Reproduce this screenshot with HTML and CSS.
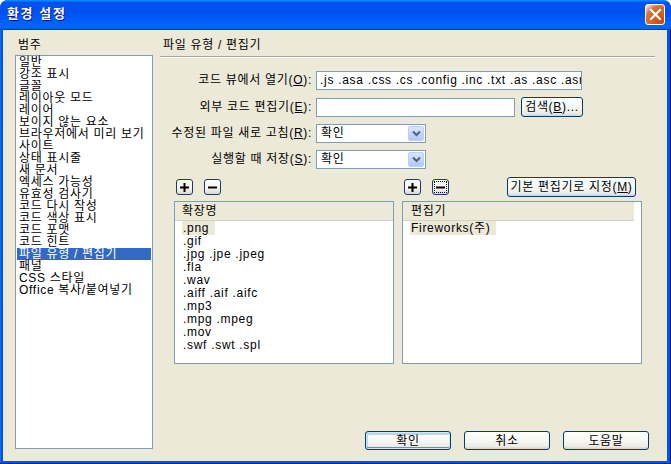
FILE: index.html
```html
<!DOCTYPE html>
<html lang="ko">
<head>
<meta charset="utf-8">
<title>환경 설정</title>
<link rel="stylesheet" href="styles.css">
</head>
<body>
<div class="window">
  <div class="titlebar">
    <span class="title">환경 설정</span>
    <span class="close"><svg width="13" height="13" viewBox="0 0 13 13"><path d="M2 2 L11 11 M11 2 L2 11" stroke="#fff" stroke-width="2.2" stroke-linecap="square"/></svg></span>
  </div>
  <div class="frame">
    <div class="client">
      <div class="left">
        <div class="caption">범주</div>
        <ul class="listbox">
          <li>일반</li>
          <li>강조 표시</li>
          <li>글꼴</li>
          <li>레이아웃 모드</li>
          <li>레이어</li>
          <li>보이지 않는 요소</li>
          <li>브라우저에서 미리 보기</li>
          <li>사이트</li>
          <li>상태 표시줄</li>
          <li>새 문서</li>
          <li>엑세스 가능성</li>
          <li>유효성 검사기</li>
          <li>코드 다시 작성</li>
          <li>코드 색상 표시</li>
          <li>코드 포맷</li>
          <li>코드 힌트</li>
          <li class="sel">파일 유형 / 편집기</li>
          <li>패널</li>
          <li>CSS 스타일</li>
          <li>Office 복사/붙여넣기</li>
        </ul>
      </div>
      <div class="right">
        <div class="caption">파일 유형 / 편집기</div>
        <div class="rule"></div>
        <div class="form">
          <label>코드 뷰에서 열기(<u>O</u>):</label>
          <div class="field wide">.js .asa .css .cs .config .inc .txt .as .asc .asr .ascx</div>
          <label>외부 코드 편집기(<u>E</u>):</label>
          <div class="field-row">
            <div class="field medium"></div>
            <span class="btn browse">검색(<u>B</u>)...</span>
          </div>
          <label>수정된 파일 새로 고침(<u>R</u>):</label>
          <div class="combo"><span class="combo-text">확인</span><span class="arrow"><svg width="9" height="7" viewBox="0 0 9 7"><path d="M1 1.5 L4.5 5 L8 1.5" fill="none" stroke="#4D6185" stroke-width="2"/></svg></span></div>
          <label>실행할 때 저장(<u>S</u>):</label>
          <div class="combo"><span class="combo-text">확인</span><span class="arrow"><svg width="9" height="7" viewBox="0 0 9 7"><path d="M1 1.5 L4.5 5 L8 1.5" fill="none" stroke="#4D6185" stroke-width="2"/></svg></span></div>
        </div>
        <div class="tables">
          <div class="col col-ext">
            <div class="tools">
              <span class="mini"><svg width="9" height="9" viewBox="0 0 9 9"><path d="M3.5 0h2v3.5H9v2H5.5V9h-2V5.5H0v-2h3.5z" fill="#000"/></svg></span>
              <span class="mini"><svg width="9" height="9" viewBox="0 0 9 9"><path d="M0 3.5h9v2H0z" fill="#000"/></svg></span>
            </div>
            <div class="table">
              <div class="thead">확장명</div>
              <ul class="rows">
                <li><span class="hl">.png</span></li>
                <li><span>.gif</span></li>
                <li><span>.jpg .jpe .jpeg</span></li>
                <li><span>.fla</span></li>
                <li><span>.wav</span></li>
                <li><span>.aiff .aif .aifc</span></li>
                <li><span>.mp3</span></li>
                <li><span>.mpg .mpeg</span></li>
                <li><span>.mov</span></li>
                <li><span>.swf .swt .spl</span></li>
              </ul>
            </div>
          </div>
          <div class="col col-ed">
            <div class="tools">
              <span class="mini"><svg width="9" height="9" viewBox="0 0 9 9"><path d="M3.5 0h2v3.5H9v2H5.5V9h-2V5.5H0v-2h3.5z" fill="#000"/></svg></span>
              <span class="mini focus"><svg width="9" height="9" viewBox="0 0 9 9"><path d="M0 3.5h9v2H0z" fill="#000"/></svg></span>
              <span class="spacer"></span>
              <span class="btn setdef">기본 편집기로 지정(<u>M</u>)</span>
            </div>
            <div class="table">
              <div class="thead ed">편집기</div>
              <ul class="rows ed">
                <li><span class="hl">Fireworks(주)</span></li>
              </ul>
            </div>
          </div>
        </div>
        <div class="buttons">
          <span class="btn dlg default">확인</span>
          <span class="btn dlg">취소</span>
          <span class="btn dlg">도움말</span>
        </div>
      </div>
    </div>
  </div>
</div>
</body>
</html>
```

FILE: styles.css
```css
* { box-sizing: border-box; }
html, body { margin: 0; padding: 0; }
body {
  width: 671px;
  height: 464px;
  overflow: hidden;
  background: #fff;
  font-family: "Liberation Sans", "Noto Sans CJK KR", sans-serif;
  font-size: 12px;
  letter-spacing: 0.7px;
  color: #000;
}
ul { margin: 0; padding: 0; list-style: none; }
u { text-decoration: underline; text-underline-offset: 1px; }

.window {
  width: 671px;
  height: 464px;
  display: flex;
  flex-direction: column;
  border-radius: 8px 8px 0 0;
  overflow: hidden;
  background: #0054E3;
}
.titlebar {
  height: 30px;
  flex: none;
  display: flex;
  align-items: center;
  justify-content: space-between;
  padding: 0 5px 0 7px;
  background: linear-gradient(180deg, #0997ff 0%, #0053ee 8%, #0050ee 40%, #0066ff 88%, #0066ff 93%, #005bff 95%, #003dd7 96%, #003dd7 100%);
}
.title {
  color: #fff;
  font-weight: bold;
  font-size: 13px;
  line-height: 16px;
  letter-spacing: 1.6px;
  text-shadow: 1px 1px 0 #0f1089;
  margin-top: -2px;
}
.close {
  width: 20px;
  height: 21px;
  margin-top: -1px;
  margin-right: 1px;
  border: 1px solid #fff;
  border-radius: 3px;
  display: flex;
  align-items: center;
  justify-content: center;
  background: radial-gradient(circle at 90% 90%, #cc4600 0%, #dc6527 55%, #cd7546 70%, #ffccb2 90%, #ffffff 100%);
}
.frame {
  flex: 1;
  display: flex;
  padding: 0 4px 3px 3px;
  background: #0055e5;
  box-shadow: inset -1px -1px 0 #00138c, inset 1px 0 0 #166aee;
}
.client {
  flex: 1;
  display: flex;
  gap: 7px;
  padding: 9px 12px 12px 12px;
  background: #ECE9D8;
}
.caption {
  height: 12px;
  line-height: 12px;
  padding-left: 3px;
  white-space: nowrap;
}
.left {
  width: 138px;
  flex: none;
  display: flex;
  flex-direction: column;
}
.left .caption { margin-bottom: 4px; }
.listbox {
  flex: 1;
  background: #fff;
  border: 1px solid #7F9DB9;
  padding: 0 1px;
}
.listbox li {
  height: 12px;
  line-height: 12px;
  padding-left: 2px;
  white-space: nowrap;
}
.listbox li.sel {
  background: #316AC5;
  color: #fff;
}

.right {
  flex: 1;
  display: flex;
  flex-direction: column;
}
.rule {
  height: 2px;
  margin-top: 5px;
  border-top: 1px solid #ACA899;
  border-bottom: 1px solid #fff;
}
.form {
  margin-top: 13px;
  display: grid;
  grid-template-columns: 152px auto;
  column-gap: 4px;
  row-gap: 7px;
  align-items: center;
}
.form label {
  text-align: right;
  line-height: 19px;
  white-space: nowrap;
}
.field {
  height: 19px;
  border: 1px solid #7F9DB9;
  background: #fff;
  line-height: 17px;
  padding-left: 3px;
  white-space: nowrap;
  overflow: hidden;
}
.field.wide { width: 266px; }
.field.medium { width: 199px; }
.field-row {
  display: flex;
  align-items: center;
  gap: 6px;
}
.combo {
  width: 110px;
  height: 19px;
  border: 1px solid #7F9DB9;
  background: #fff;
  display: flex;
  align-items: center;
  justify-content: space-between;
  padding: 1px;
}
.combo-text {
  padding-left: 3px;
  line-height: 15px;
}
.arrow {
  width: 16px;
  height: 15px;
  border: 1px solid #B9D1FA;
  border-radius: 2px;
  background: linear-gradient(180deg, #dce6fd 0%, #c1d3fb 60%, #b4c8f6 100%);
  display: flex;
  align-items: center;
  justify-content: center;
}

.btn {
  display: inline-flex;
  align-items: center;
  justify-content: center;
  border: 1px solid #003C74;
  border-radius: 3px;
  background: linear-gradient(180deg, #ffffff 0%, #f7f7f4 50%, #ecebe6 85%, #d6d0c5 100%);
  white-space: nowrap;
  line-height: 14px;
}
.browse { width: 62px; height: 20px; }
.setdef { width: 129px; height: 20px; margin-right: 6px; }

.tables {
  margin: 8px 13px 0 14px;
  display: flex;
  gap: 8px;
}
.col-ext { width: 220px; flex: none; }
.col-ed { flex: 1; }
.tools {
  height: 20px;
  display: flex;
  align-items: center;
  gap: 11px;
  padding-left: 2px;
  margin-bottom: 4px;
}
.spacer { flex: 1; }
.mini {
  width: 17px;
  height: 16px;
  border: 1px solid #1c3a70;
  border-radius: 3px;
  background: linear-gradient(180deg, #ffffff 0%, #f4f3ee 60%, #dcd8cc 100%);
  display: flex;
  align-items: center;
  justify-content: center;
}
.mini.focus {
  outline: 1px dotted #000;
  outline-offset: -3px;
}
.table {
  height: 163px;
  border: 1px solid #7F9DB9;
  background: #fff;
}
.thead {
  height: 19px;
  line-height: 18px;
  padding-left: 7px;
  background: #ECE9D8;
  border-bottom: 1px solid #d6d2c2;
  white-space: nowrap;
}
.thead.ed { padding-left: 8px; margin-right: 7px; }
.rows {
  margin-top: 1px;
  padding-left: 7px;
}
.rows.ed { padding-left: 7px; }
.rows li {
  height: 13px;
  line-height: 13px;
  white-space: nowrap;
}
.rows li span { padding: 0 1px; }
.rows li span.hl { background: #ECE9D8; padding-right: 6px; }

.buttons {
  margin-top: auto;
  margin-bottom: -1px;
  margin-right: 6px;
  display: flex;
  justify-content: flex-end;
  gap: 13px;
}
.btn.dlg { width: 86px; height: 19px; }
.btn.default {
  box-shadow: inset 0 0 0 1px #cee7ff, inset 0 -1px 0 1px #6982ee, inset 1px 2px 0 1px #bcd4f6;
}
```
